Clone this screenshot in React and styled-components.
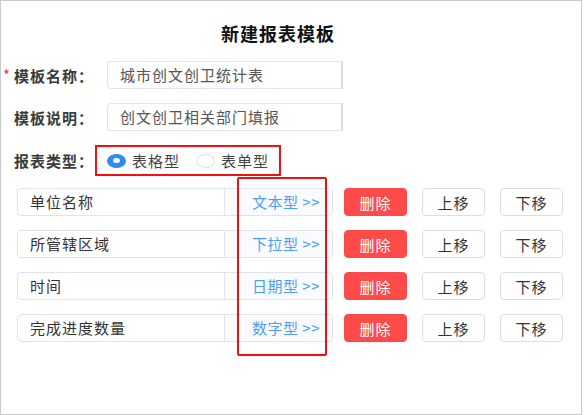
import React from "react";
import styled, { createGlobalStyle } from "styled-components";

const GlobalStyle = createGlobalStyle`
  html, body {
    margin: 0;
    padding: 0;
    background: #fff;
  }
  body {
    font-family: "Noto Sans CJK SC", "Noto Sans", sans-serif;
  }
`;

const Frame = styled.div`
  position: relative;
  box-sizing: border-box;
  width: 582px;
  height: 415px;
  border: 1px solid #c9c9c9;
  background: #fff;
  padding-top: 19px;
`;

const Title = styled.h2`
  margin: 0;
  height: 26px;
  line-height: 26px;
  text-align: center;
  padding-right: 26px;
  font-size: 18px;
  font-weight: 700;
  letter-spacing: 1px;
  color: #111;
`;

const Form = styled.div`
  display: flex;
  flex-direction: column;
  gap: 14px;
  margin-top: 15px;
  padding-left: 2px;
`;

const FieldRow = styled.div`
  display: flex;
  align-items: center;
  height: ${props => (props.tall ? "31px" : "28px")};
`;

const Label = styled.label`
  position: relative;
  width: 104px;
  padding-left: 11px;
  box-sizing: border-box;
  font-size: 15px;
  font-weight: 700;
  letter-spacing: 1px;
  color: #3b3b3b;
  white-space: nowrap;

  &::before {
    content: ${props => (props.required ? '"*"' : '""')};
    position: absolute;
    left: 0;
    top: -1px;
    color: #f23c3c;
    font-weight: 400;
    letter-spacing: 0;
  }
`;

const TextInput = styled.div`
  box-sizing: border-box;
  width: 236px;
  height: 28px;
  line-height: 26px;
  padding-left: 12px;
  border: 1px solid #e1e4ea;
  border-right: 2px solid #dadada;
  border-radius: 4px 0 0 4px;
  font-size: 15px;
  letter-spacing: 1px;
  color: #555;
`;

const RadioGroup = styled.div`
  box-sizing: border-box;
  display: flex;
  align-items: center;
  gap: 16px;
  height: 31px;
  margin-left: -12px;
  padding: 0 10px;
  border: 2px solid #f01010;
`;

const RadioOption = styled.span`
  display: flex;
  align-items: center;
  gap: 6px;
  font-size: 15px;
  letter-spacing: 1px;
  color: #444;
`;

const RadioDot = styled.span`
  box-sizing: border-box;
  width: 19px;
  height: 14px;
  border-radius: 50%;
  border: 1px solid ${props => (props.checked ? "#2d8cf0" : "#dcdfe6")};
  background: ${props => (props.checked ? "#2d8cf0" : "#fff")};
  display: flex;
  align-items: center;
  justify-content: center;

  &::after {
    content: "";
    display: ${props => (props.checked ? "block" : "none")};
    width: 7px;
    height: 5px;
    border-radius: 50%;
    background: #fff;
  }
`;

const FieldList = styled.div`
  position: relative;
  display: flex;
  flex-direction: column;
  gap: 14px;
  margin-top: 12px;
  padding-left: 16px;
`;

const ItemRow = styled.div`
  display: flex;
  align-items: center;
  height: 28px;
`;

const ItemField = styled.div`
  box-sizing: border-box;
  display: flex;
  width: 316px;
  height: 28px;
  border: 1px solid #dfe3ea;
  border-radius: 4px;
  overflow: hidden;
`;

const ItemName = styled.div`
  box-sizing: border-box;
  width: 207px;
  padding-left: 12px;
  line-height: 26px;
  border-right: 1px solid #dfe3ea;
  font-size: 15px;
  letter-spacing: 1px;
  color: #333;
`;

const ItemType = styled.div`
  flex: 1;
  text-align: right;
  padding-right: 12px;
  line-height: 26px;
  background: #f9fbff;
  font-size: 15px;
  letter-spacing: 0.5px;
  color: #4d9ff5;
`;

const Button = styled.button`
  box-sizing: border-box;
  width: 63px;
  height: 28px;
  margin-left: ${props => props.gap}px;
  padding: 0;
  border-radius: 4px;
  border: 1px solid ${props => (props.danger ? "#f64b4b" : "#dcdfe6")};
  background: ${props => (props.danger ? "#ff4a4a" : "#fff")};
  color: ${props => (props.danger ? "#fff" : "#333")};
  font-family: inherit;
  font-size: 15px;
  letter-spacing: 1px;
  cursor: pointer;
`;

const Highlight = styled.div`
  position: absolute;
  left: 236px;
  top: -11px;
  width: 90px;
  height: 179px;
  box-sizing: border-box;
  border: 2px solid #f01010;
  border-radius: 2px;
  pointer-events: none;
`;

const items = [
  { name: "单位名称", type: "文本型" },
  { name: "所管辖区域", type: "下拉型" },
  { name: "时间", type: "日期型" },
  { name: "完成进度数量", type: "数字型" }
];

const App = () => {
  return (
    <>
      <GlobalStyle />
      <Frame>
        <Title>新建报表模板</Title>
        <Form>
          <FieldRow>
            <Label required>模板名称：</Label>
            <TextInput>城市创文创卫统计表</TextInput>
          </FieldRow>
          <FieldRow>
            <Label>模板说明：</Label>
            <TextInput>创文创卫相关部门填报</TextInput>
          </FieldRow>
          <FieldRow tall>
            <Label>报表类型：</Label>
            <RadioGroup>
              <RadioOption>
                <RadioDot checked />
                表格型
              </RadioOption>
              <RadioOption>
                <RadioDot />
                表单型
              </RadioOption>
            </RadioGroup>
          </FieldRow>
        </Form>
        <FieldList>
          {items.map(item => (
            <ItemRow key={item.name}>
              <ItemField>
                <ItemName>{item.name}</ItemName>
                <ItemType>{item.type} &gt;&gt;</ItemType>
              </ItemField>
              <Button danger gap={11}>删除</Button>
              <Button gap={15}>上移</Button>
              <Button gap={15}>下移</Button>
            </ItemRow>
          ))}
          <Highlight />
        </FieldList>
      </Frame>
    </>
  );
};

export default App;
